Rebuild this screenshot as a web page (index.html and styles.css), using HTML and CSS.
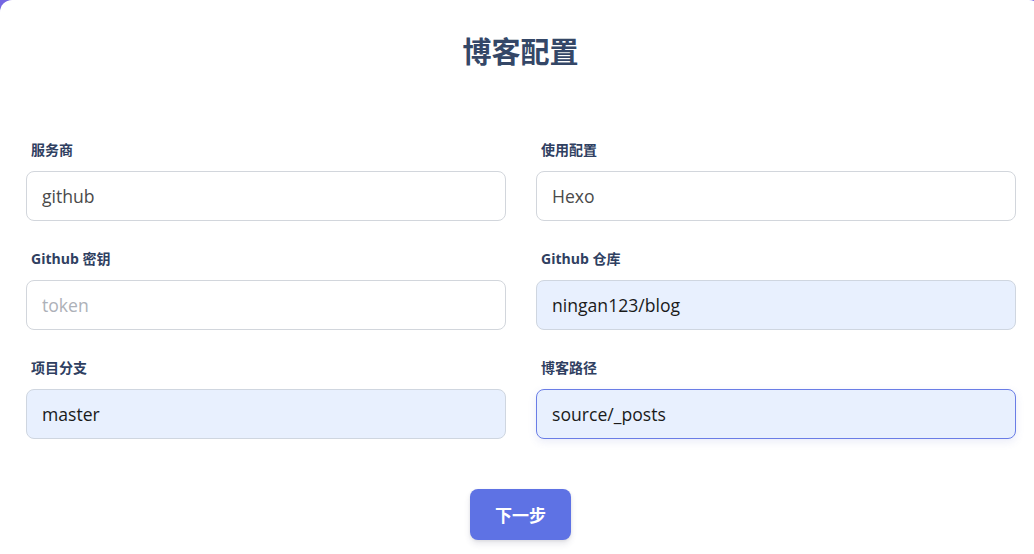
FILE: index.html
```html
<!DOCTYPE html>
<html lang="zh">
<head>
<meta charset="utf-8">
<title>博客配置</title>
<link rel="stylesheet" href="styles.css">
</head>
<body>
<div class="card">
  <h1 class="title">博客配置</h1>
  <form class="form">
    <div class="field">
      <label class="label">服务商</label>
      <input class="input" type="text" value="github">
    </div>
    <div class="field">
      <label class="label">使用配置</label>
      <input class="input" type="text" value="Hexo">
    </div>
    <div class="field">
      <label class="label">Github 密钥</label>
      <input class="input" type="text" placeholder="token">
    </div>
    <div class="field">
      <label class="label">Github 仓库</label>
      <input class="input filled" type="text" value="ningan123/blog">
    </div>
    <div class="field">
      <label class="label">项目分支</label>
      <input class="input filled" type="text" value="master">
    </div>
    <div class="field">
      <label class="label">博客路径</label>
      <input class="input filled focus" type="text" value="source/_posts">
    </div>
  </form>
  <div class="actions">
    <button class="btn" type="button">下一步</button>
  </div>
</div>
</body>
</html>
```

FILE: styles.css
```css
html, body {
  margin: 0;
  padding: 0;
  height: 100%;
  overflow: hidden;
}
body {
  background: #7466e2;
  font-family: "Open Sans", "Noto Sans CJK SC", sans-serif;
}
.card {
  box-sizing: border-box;
  width: 1041px;
  min-height: 100vh;
  background: #ffffff;
  border-radius: 12px 12px 0 0;
  padding: 32px 26px 14px 26px;
}
.title {
  margin: 0 0 68px 0;
  text-align: center;
  font-size: 29px;
  line-height: 40px;
  font-weight: 700;
  color: #344767;
}
.form {
  display: grid;
  grid-template-columns: 480px 480px;
  column-gap: 30px;
  row-gap: 28px;
}
.field {
  display: flex;
  flex-direction: column;
}
.label {
  margin: 0 0 12px 5px;
  font-size: 14px;
  line-height: 19px;
  font-weight: 700;
  color: #2f4061;
}
.input {
  box-sizing: border-box;
  height: 50px;
  width: 100%;
  border: 1px solid #d2d6dc;
  border-radius: 8px;
  padding: 0 15px;
  font-family: "Open Sans", "Noto Sans CJK SC", sans-serif;
  font-size: 17.6px;
  color: #4a4a4a;
  background: #ffffff;
  outline: none;
}
.input::placeholder {
  color: #adb1b8;
}
.input.filled {
  background: #e8f0fe;
  color: #1a1a1a;
  border-color: #cfd6e0;
}
.input.focus {
  border-color: #6a7de6;
  box-shadow: 0 3px 9px rgba(80, 100, 200, 0.12);
}
.actions {
  display: flex;
  justify-content: center;
  margin-top: 50px;
}
.btn {
  width: 101px;
  height: 51px;
  border: none;
  border-radius: 8px;
  background: #5e72e4;
  color: #ffffff;
  font-family: "Open Sans", "Noto Sans CJK SC", sans-serif;
  font-size: 17px;
  font-weight: 700;
  box-shadow: 0 4px 6px rgba(50, 50, 93, 0.11), 0 1px 3px rgba(0, 0, 0, 0.08);
}
```
